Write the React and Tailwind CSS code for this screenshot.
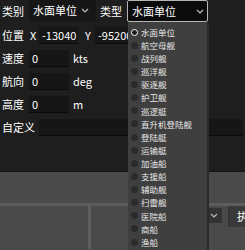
import React from "react";

const items = [
  "水面单位", "航空母舰", "战列舰", "巡洋舰", "驱逐舰", "护卫舰", "巡逻艇", "直升机登陆舰",
  "登陆艇", "运输艇", "加油船", "支援船", "辅助舰", "扫雷舰", "医院船", "商船", "渔船",
];

function Chevron({ className = "" }) {
  return (
    <svg width="8" height="5" viewBox="0 0 8 5" className={className}>
      <path d="M1 1 L4 4 L7 1" fill="none" stroke="#bdbdbd" strokeWidth="1.2" />
    </svg>
  );
}

function Input({ value, w }) {
  return (
    <div className={`h-[17px] ${w} bg-[#161616] border-b border-[#0a0a0a] flex items-center pl-[3px] text-[11px] text-white`}>
      {value}
    </div>
  );
}

export default function App() {
  return (
    <div
      className="relative w-[245px] h-[250px] overflow-hidden bg-[#4a4a4a] text-white"
      style={{ fontFamily: '"Noto Sans CJK SC", "Noto Sans", sans-serif' }}
    >
      <div className="h-[172px] bg-[#1e1e1e] border-b border-[#151515] flex flex-col">
        <div className="h-[22px] flex items-start">
          <div className="w-[29px] pl-[2px] h-[22px] flex items-center text-[11px]">类别</div>
          <div className="w-[67px] h-[21px] bg-[#161616] flex items-center pl-[4px] pr-[7px] justify-between text-[11px]">
            <span>水面单位</span>
            <Chevron />
          </div>
          <div className="w-[31px] h-[22px] pl-[4px] flex items-center text-[11px]">类型</div>
          <div className="w-[81px] h-[22px] bg-[#0b0b0b] border border-[#b5b5b5] rounded-[2px] flex items-center justify-between pl-[4px] pr-[3px] text-[11px]">
            <span>水面单位</span>
            <Chevron />
          </div>
        </div>
        <div className="mt-[2px] h-[23px] flex items-center text-[11px]">
          <div className="w-[29px] pl-[2px]">位置</div>
          <div className="w-[10px] pl-[1px]">X</div>
          <Input value="-13040" w="w-[39px]" />
          <div className="w-[17px] pl-[7px]">Y</div>
          <Input value="-95200" w="w-[60px]" />
        </div>
        {[["速度", "kts"], ["航向", "deg"], ["高度", "m"]].map(([l, u]) => (
          <div key={l} className="h-[23px] flex items-center text-[11px]">
            <div className="w-[29px] pl-[2px]">{l}</div>
            <Input value="0" w="w-[40px]" />
            <div className="pl-[4px]">{u}</div>
          </div>
        ))}
        <div className="h-[23px] flex items-center text-[11px]">
          <div className="w-[39px] pl-[2px]">自定义</div>
          <Input value="" w="w-[204px]" />
        </div>
      </div>
      <div className="h-[31px] bg-[#4a4a4a]"></div>
      <div className="h-[3px] bg-[#5c5c5c]"></div>
      <div className="flex h-[43px]">
        <div className="w-[88px] bg-[#4a4a4a]"></div>
        <div className="w-[3px] bg-[#5f5f5f]"></div>
        <div className="flex-1 flex justify-end items-start pt-[2px] gap-[6px]">
          <div className="w-[60px] h-[15px] bg-[#333333] flex items-center justify-end pr-[4px]">
            <Chevron />
          </div>
          <div className="w-[17px] h-[21px] bg-[#3a3a3a] border-l border-[#333] flex items-center pl-[8px] text-[11px] mt-[-2px]">
            执
          </div>
        </div>
      </div>

      <div className="absolute left-[128px] top-[22px] w-[81px] h-[240px] bg-[#3f3f3f] border-r-2 border-[#2a2a2a] pt-[3.5px] pl-[3px]">
        {items.map((t, i) => (
          <div key={t} className="h-[13.125px] flex items-center gap-[3px]">
            {i === 0 ? (
              <div className="w-[7px] h-[7px] rounded-full border-[1.5px] border-white bg-[#1a1a1a]"></div>
            ) : (
              <div className="w-[7px] h-[7px] rounded-full bg-[#2b2b2b]"></div>
            )}
            <span className="text-[8.5px] leading-none text-[#e8e8e8]">{t}</span>
          </div>
        ))}
      </div>
    </div>
  );
}
